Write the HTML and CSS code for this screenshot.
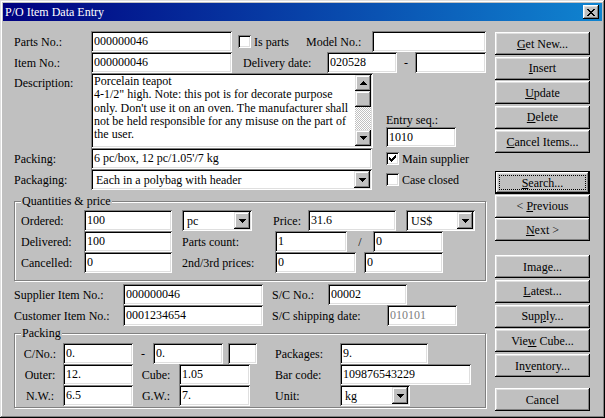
FILE: index.html
```html
<!DOCTYPE html>
<html lang="en">
<head>
  <meta charset="utf-8">
  <title>P/O Item Data Entry</title>
  <link rel="stylesheet" href="styles.css">
</head>
<body>
  <div class="window">
    <!-- TITLE BAR -->
    <div class="titlebar">
      <span class="caption">P/O Item Data Entry</span>
      <span class="close"><svg width="8" height="7" viewBox="0 0 8 7"><path d="M0 0h2v1H0zM6 0h2v1H6zM1 1h2v1H1zM5 1h2v1H5zM2 2h4v1H2zM3 3h2v1H3zM2 4h4v1H2zM1 5h2v1H1zM5 5h2v1H5zM0 6h2v1H0zM6 6h2v1H6z"/></svg></span>
    </div>

    <div class="dialog">
      <!-- FORM -->
      <div class="form">
        <div class="row">
          <label class="lbl w77">Parts No.:</label>
          <input class="field w141" value="000000046">
          <span class="checkwrap ml6 w68"><span class="check"></span>Is parts</span>
          <label class="lbl w66">Model No.:</label>
          <input class="field w114" value="">
        </div>
        <div class="row">
          <label class="lbl w77">Item No.:</label>
          <input class="field w141" value="000000046">
          <label class="lbl ml11 w84">Delivery date:</label>
          <input class="field w70" value="020528">
          <span class="lbl sep w18">-</span>
          <input class="field w71" value="">
        </div>
        <div class="row memo-row">
          <label class="lbl w77 top">Description:</label>
          <div class="memo">
            <div class="memo-text">Porcelain teapot
4-1/2" high. Note: this pot is for decorate purpose
only. Don't use it on an oven. The manufacturer shall
not be held responsible for any misuse on the part of
the user.</div>
            <div class="vscroll">
              <span class="sbtn"><svg width="7" height="4" viewBox="0 0 7 4"><path d="M3 0h1v1H3zM2 1h3v1H2zM1 2h5v1H1zM0 3h7v1H0z"/></svg></span>
              <span class="thumb"></span>
              <span class="track"></span>
              <span class="sbtn"><svg width="7" height="4" viewBox="0 0 7 4"><path d="M0 0h7v1H0zM1 1h5v1H1zM2 2h3v1H2zM3 3h1v1H3z"/></svg></span>
            </div>
          </div>
          <div class="seq ml13">
            <label class="lbl">Entry seq.:</label>
            <input class="field w70 h20" value="1010">
          </div>
        </div>
        <div class="row">
          <label class="lbl w77">Packing:</label>
          <input class="field w281" value="6 pc/box, 12 pc/1.05'/7 kg">
          <span class="checkwrap ml14"><span class="check"><svg width="7" height="7" viewBox="0 0 7 7"><path d="M6 0h1v1H6zM5 1h2v1H5zM0 2h1v1H0zM4 2h3v1H4zM0 3h2v1H0zM3 3h3v1H3zM0 4h5v1H0zM1 5h3v1H1zM2 6h1v1H2z"/></svg></span>Main supplier</span>
        </div>
        <div class="row">
          <label class="lbl w77">Packaging:</label>
          <div class="select w281"><span>Each in a polybag with header</span><span class="drop"><svg width="7" height="4" viewBox="0 0 7 4"><path d="M0 0h7v1H0zM1 1h5v1H1zM2 2h3v1H2zM3 3h1v1H3z"/></svg></span></div>
          <span class="checkwrap ml14"><span class="check"></span>Case closed</span>
        </div>

        <!-- Quantities & price -->
        <fieldset class="group qty">
          <legend>Quantities &amp; price</legend>
          <div class="row">
            <label class="lbl w63">Ordered:</label>
            <input class="field w88" value="100">
            <div class="select ml10 w70"><span>pc</span><span class="drop"><svg width="7" height="4" viewBox="0 0 7 4"><path d="M0 0h7v1H0zM1 1h5v1H1zM2 2h3v1H2zM3 3h1v1H3z"/></svg></span></div>
            <label class="lbl ml21 w35">Price:</label>
            <input class="field w88" value="31.6">
            <div class="select ml10 w69"><span>US$</span><span class="drop"><svg width="7" height="4" viewBox="0 0 7 4"><path d="M0 0h7v1H0zM1 1h5v1H1zM2 2h3v1H2zM3 3h1v1H3z"/></svg></span></div>
          </div>
          <div class="row">
            <label class="lbl w63">Delivered:</label>
            <input class="field w88" value="100">
            <label class="lbl ml10 w93">Parts count:</label>
            <input class="field w72" value="1">
            <span class="lbl sep w26">/</span>
            <input class="field w70" value="0">
          </div>
          <div class="row">
            <label class="lbl w63">Cancelled:</label>
            <input class="field w88" value="0">
            <label class="lbl ml10 w93">2nd/3rd prices:</label>
            <input class="field w81" value="0">
            <input class="field ml8 w79" value="0">
          </div>
        </fieldset>

        <div class="row supplier">
          <label class="lbl w109">Supplier Item No.:</label>
          <input class="field w140" value="000000046">
          <label class="lbl ml9 w56">S/C No.:</label>
          <input class="field w79" value="00002">
        </div>
        <div class="row">
          <label class="lbl w109">Customer Item No.:</label>
          <input class="field w140" value="0001234654">
          <label class="lbl ml9 w115">S/C shipping date:</label>
          <input class="field w70 grey" value="010101" readonly>
        </div>

        <!-- Packing -->
        <fieldset class="group pack">
          <legend>Packing</legend>
          <div class="row">
            <label class="lbl w42 mid">C/No.:</label>
            <input class="field w70" value="0.">
            <span class="lbl sep w20">-</span>
            <input class="field w70" value="0.">
            <input class="field ml5 w29" value="">
            <label class="lbl ml18 w65">Packages:</label>
            <input class="field w88" value="9.">
          </div>
          <div class="row">
            <label class="lbl w42 mid">Outer:</label>
            <input class="field w70" value="12.">
            <label class="lbl w46 sep">Cube:</label>
            <input class="field w71" value="1.05">
            <label class="lbl ml25 w65">Bar code:</label>
            <input class="field w131" value="109876543229">
          </div>
          <div class="row">
            <label class="lbl w42 mid">N.W.:</label>
            <input class="field w70" value="6.5">
            <label class="lbl w46 sep">G.W.:</label>
            <input class="field w71" value="7.">
            <label class="lbl ml25 w65">Unit:</label>
            <div class="select w70"><span>kg</span><span class="drop"><svg width="7" height="4" viewBox="0 0 7 4"><path d="M0 0h7v1H0zM1 1h5v1H1zM2 2h3v1H2zM3 3h1v1H3z"/></svg></span></div>
          </div>
        </fieldset>
      </div>

      <!-- BUTTONS -->
      <div class="buttons">
        <div class="btn-group g1">
          <button class="btn"><u>G</u>et New...</button>
          <button class="btn"><u>I</u>nsert</button>
          <button class="btn"><u>U</u>pdate</button>
          <button class="btn"><u>D</u>elete</button>
          <button class="btn"><u>C</u>ancel Items...</button>
        </div>
        <div class="btn-group g2">
          <button class="btn default"><u>S</u>earch...</button>
          <button class="btn">&lt; <u>P</u>revious</button>
          <button class="btn"><u>N</u>ext &gt;</button>
        </div>
        <div class="btn-group g3">
          <button class="btn">Ima<u>g</u>e...</button>
          <button class="btn"><u>L</u>atest...</button>
          <button class="btn">Sup<u>p</u>ly...</button>
          <button class="btn">Vie<u>w</u> Cube...</button>
          <button class="btn">In<u>v</u>entory...</button>
        </div>
        <div class="btn-group g4">
          <button class="btn">Cancel</button>
        </div>
      </div>
    </div>
  </div>
</body>
</html>
```

FILE: styles.css
```css
/* --- Window frame --- */
*{box-sizing:border-box}
body{margin:0;font:12px/14px "Liberation Serif",serif;color:#000;background:#c0c0c0}
.window{width:605px;height:418px;padding:3px;background:#c0c0c0;display:flex;flex-direction:column;
  box-shadow:inset -1px -1px #000,inset 1px 1px #dfdfdf,inset -2px -2px #808080,inset 2px 2px #fff}
.titlebar{height:18px;flex:none;display:flex;align-items:center;padding:0 3px 0 2px;color:#fff;
  background:linear-gradient(90deg,#000080,#1084d0)}
.caption{flex:1;white-space:nowrap}
.close{width:16px;height:14px;display:flex;align-items:center;justify-content:center;background:#c0c0c0;
  box-shadow:inset -1px -1px #000,inset 1px 1px #fff,inset -2px -2px #808080,inset 2px 2px #dfdfdf}
.close svg{margin-top:1px}

/* --- Layout --- */
.dialog{flex:1;display:flex;gap:9px;padding:10px 0 0 11px}
.form{width:472px;flex:none;display:flex;flex-direction:column}
.row{display:flex;align-items:center;height:21px;flex:none}
.lbl{flex:none;white-space:nowrap}
.sep{text-align:center}
.mid{text-align:center;padding-right:4px}
.top{align-self:flex-start;padding-top:3px}

/* --- Fields --- */
.field{height:21px;flex:none;border:0;margin:0;padding:0 0 0 3px;background:#fff;font:inherit;color:#000;outline:none;
  box-shadow:inset 1px 1px #808080,inset -1px -1px #fff,inset 2px 2px #000,inset -2px -2px #dfdfdf}
.field.grey{color:#808080}
.h20{height:20px}
.select{height:21px;flex:none;display:flex;align-items:center;padding:2px;background:#fff;
  box-shadow:inset 1px 1px #808080,inset -1px -1px #fff,inset 2px 2px #000,inset -2px -2px #dfdfdf}
.select span:first-child{flex:1;padding-left:3px;white-space:nowrap;overflow:hidden}
.drop,.sbtn{width:16px;height:17px;flex:none;display:flex;align-items:center;justify-content:center;background:#c0c0c0;
  box-shadow:inset -1px -1px #000,inset 1px 1px #dfdfdf,inset -2px -2px #808080,inset 2px 2px #fff}
.checkwrap{display:flex;align-items:center;gap:3px;flex:none;white-space:nowrap}
.check{width:13px;height:13px;flex:none;display:flex;align-items:center;justify-content:center;background:#fff;
  box-shadow:inset 1px 1px #808080,inset -1px -1px #fff,inset 2px 2px #000,inset -2px -2px #dfdfdf}

/* --- Description memo --- */
.memo-row{height:75px;align-items:stretch}
.memo{width:282px;flex:none;display:flex;padding:2px;background:#fff;
  box-shadow:inset 1px 1px #808080,inset -1px -1px #fff,inset 2px 2px #000,inset -2px -2px #dfdfdf}
.memo-text{flex:1;padding:0 0 0 1px;white-space:pre;overflow:hidden;line-height:13.3px}
.vscroll{width:16px;display:flex;flex-direction:column}
.vscroll .sbtn{height:16px}
.thumb{height:16px;background:#c0c0c0;
  box-shadow:inset -1px -1px #000,inset 1px 1px #dfdfdf,inset -2px -2px #808080,inset 2px 2px #fff}
.track{flex:1;background:repeating-conic-gradient(#fff 0 25%,#c0c0c0 0 50%) 0 0/2px 2px}
.seq{display:flex;flex-direction:column;justify-content:flex-end;padding-bottom:1px}

/* --- Group boxes --- */
.group{margin:0;padding:2px 0 7px 6px;border:1px solid #808080;min-width:0;width:472px;
  box-shadow:inset 1px 1px #fff,1px 1px #fff}
.group legend{padding:0 1px;line-height:13px;background:#c0c0c0}
.qty{margin-top:5px}
.supplier{margin-top:3px}
.pack{margin-top:1px;padding-top:3px;padding-bottom:1px}

/* --- Buttons --- */
.buttons{width:95px;flex:none;display:flex;flex-direction:column;padding-top:1px}
.btn-group{display:flex;flex-direction:column}
.g1{gap:1.5px}
.g2{gap:.5px;margin-top:18px}
.g3{gap:1.75px;margin-top:14px}
.g4{margin-top:11px}
.btn{height:23px;border:0;padding:0;margin:0;background:#c0c0c0;font:inherit;color:#000;
  box-shadow:inset -1px -1px #000,inset 1px 1px #fff,inset -2px -2px #808080,inset 2px 2px #dfdfdf}
.btn.default{outline:1px dotted #000;outline-offset:-5px;
  box-shadow:inset 0 0 0 1px #000,inset -2px -2px #000,inset 2px 2px #fff,inset -3px -3px #808080,inset 3px 3px #dfdfdf}

/* --- Widths --- */
.w18{width:18px}.w20{width:20px}.w26{width:26px}.w29{width:29px}.w35{width:35px}.w42{width:42px}.w46{width:46px}
.w56{width:56px}.w63{width:63px}.w65{width:65px}.w66{width:66px}.w68{width:68px}.w69{width:69px}.w70{width:70px}
.w71{width:71px}.w72{width:72px}.w77{width:77px}.w79{width:79px}.w81{width:81px}.w84{width:84px}.w88{width:88px}
.w93{width:93px}.w109{width:109px}.w114{width:114px}.w115{width:115px}.w131{width:131px}.w140{width:140px}
.w141{width:141px}.w281{width:281px}.w282{width:282px}
.ml5{margin-left:5px}.ml6{margin-left:6px}.ml8{margin-left:8px}.ml9{margin-left:9px}.ml10{margin-left:10px}
.ml11{margin-left:11px}.ml13{margin-left:13px}.ml14{margin-left:14px}.ml18{margin-left:18px}.ml21{margin-left:21px}
.ml25{margin-left:25px}
```
